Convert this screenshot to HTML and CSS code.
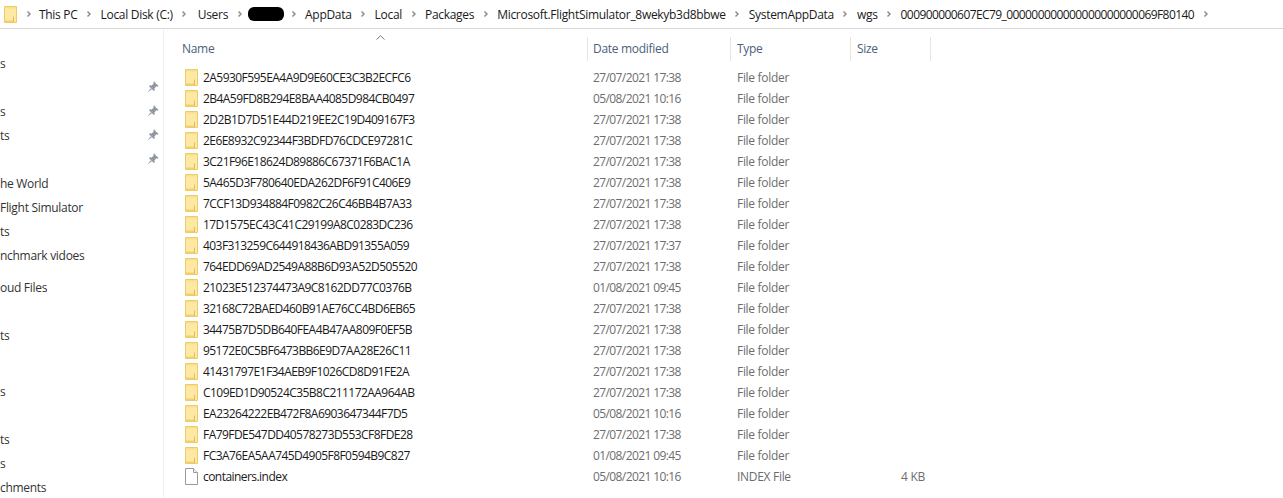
FILE: index.html
```html
<!DOCTYPE html>
<html lang="en">

<head>
    <meta charset="UTF-8">
    <meta name="viewport" content="width=device-width, initial-scale=1.0">
    <title>wgs</title>
    <link rel="stylesheet" href="styles.css">
</head>

<body>
    <svg class="defs" width="0" height="0">
        <symbol id="folder" viewBox="0 0 13 17">
            <path d="M0.5 0.5H12.5V16.5H0.5Z" fill="#fde9a4" stroke="#eccb6c"/>
            <path d="M1 1H12V2.5H1Z" fill="#fbe08a"/>
            <path d="M1 14.5H9V16H1Z" fill="#f3d06a"/>
            <path d="M9.5 10.5V16" fill="none" stroke="#e6bd55"/>
        </symbol>
        <symbol id="pin" viewBox="0 0 12 12">
            <path d="M7 0.5L11.5 5L10.5 5.8L9.5 5.3L7.5 7.3L7.7 9.3L6.8 10L2 5.2L2.7 4.3L4.7 4.5L6.7 2.5L6.2 1.5Z" fill="#8f98a3"/>
            <path d="M3.8 7.2L0.5 11.5L4.8 8.2Z" fill="#8f98a3"/>
        </symbol>
        <symbol id="chev" viewBox="0 0 6 8">
            <path d="M1.5 1.5L4 4L1.5 6.5" fill="none" stroke="#8f8f8f" stroke-width="1.5"/>
        </symbol>
    </svg>

    <div class="addressbar">
        <svg class="crumb-folder"><use href="#folder"/></svg>
        <svg class="chev"><use href="#chev"/></svg>
        <span class="crumb-first">This PC</span>
        <svg class="chev"><use href="#chev"/></svg>
        <span>Local Disk (C:)</span>
        <svg class="chev"><use href="#chev"/></svg>
        <span class="crumb-users">Users</span>
        <svg class="chev"><use href="#chev"/></svg>
        <span class="redacted"></span>
        <svg class="chev"><use href="#chev"/></svg>
        <span>AppData</span>
        <svg class="chev"><use href="#chev"/></svg>
        <span>Local</span>
        <svg class="chev"><use href="#chev"/></svg>
        <span>Packages</span>
        <svg class="chev"><use href="#chev"/></svg>
        <span>Microsoft.FlightSimulator_8wekyb3d8bbwe</span>
        <svg class="chev"><use href="#chev"/></svg>
        <span>SystemAppData</span>
        <svg class="chev"><use href="#chev"/></svg>
        <span>wgs</span>
        <svg class="chev"><use href="#chev"/></svg>
        <span class="crumb-id">000900000607EC79_000000000000000000000069F80140</span>
        <svg class="chev"><use href="#chev"/></svg>
    </div>

    <div class="explorer">
        <nav class="sidebar">
            <div class="nav-item">s</div>
            <div class="nav-item"><svg class="pin"><use href="#pin"/></svg></div>
            <div class="nav-item">s<svg class="pin"><use href="#pin"/></svg></div>
            <div class="nav-item">ts<svg class="pin"><use href="#pin"/></svg></div>
            <div class="nav-item"><svg class="pin"><use href="#pin"/></svg></div>
            <div class="nav-item">he World</div>
            <div class="nav-item">Flight Simulator</div>
            <div class="nav-item">ts</div>
            <div class="nav-item">nchmark vidoes</div>
            <div class="nav-item nav-group">oud Files</div>
            <div class="nav-item"></div>
            <div class="nav-item">ts</div>
            <div class="nav-item"></div>
            <div class="nav-item nav-group">s</div>
            <div class="nav-item"></div>
            <div class="nav-item">ts</div>
            <div class="nav-item">s</div>
            <div class="nav-item">chments</div>
        </nav>

        <main class="files">
            <div class="columns">
                <div class="col col-name">Name<svg class="sort" viewBox="0 0 9 5"><path d="M0.5 4.5L4.5 0.7L8.5 4.5" fill="none" stroke="#7a7a7a"/></svg></div>
                <div class="col col-date">Date modified</div>
                <div class="col">Type</div>
                <div class="col">Size</div>
            </div>

            <div class="row"><div class="name"><svg class="icon"><use href="#folder"/></svg>2A5930F595EA4A9D9E60CE3C3B2ECFC6</div><div class="date">27/07/2021 17:38</div><div class="cell">File folder</div><div class="cell"></div></div>
            <div class="row"><div class="name"><svg class="icon"><use href="#folder"/></svg>2B4A59FD8B294E8BAA4085D984CB0497</div><div class="date">05/08/2021 10:16</div><div class="cell">File folder</div><div class="cell"></div></div>
            <div class="row"><div class="name"><svg class="icon"><use href="#folder"/></svg>2D2B1D7D51E44D219EE2C19D409167F3</div><div class="date">27/07/2021 17:38</div><div class="cell">File folder</div><div class="cell"></div></div>
            <div class="row"><div class="name"><svg class="icon"><use href="#folder"/></svg>2E6E8932C92344F3BDFD76CDCE97281C</div><div class="date">27/07/2021 17:38</div><div class="cell">File folder</div><div class="cell"></div></div>
            <div class="row"><div class="name"><svg class="icon"><use href="#folder"/></svg>3C21F96E18624D89886C67371F6BAC1A</div><div class="date">27/07/2021 17:38</div><div class="cell">File folder</div><div class="cell"></div></div>
            <div class="row"><div class="name"><svg class="icon"><use href="#folder"/></svg>5A465D3F780640EDA262DF6F91C406E9</div><div class="date">27/07/2021 17:38</div><div class="cell">File folder</div><div class="cell"></div></div>
            <div class="row"><div class="name"><svg class="icon"><use href="#folder"/></svg>7CCF13D934884F0982C26C46BB4B7A33</div><div class="date">27/07/2021 17:38</div><div class="cell">File folder</div><div class="cell"></div></div>
            <div class="row"><div class="name"><svg class="icon"><use href="#folder"/></svg>17D1575EC43C41C29199A8C0283DC236</div><div class="date">27/07/2021 17:38</div><div class="cell">File folder</div><div class="cell"></div></div>
            <div class="row"><div class="name"><svg class="icon"><use href="#folder"/></svg>403F313259C644918436ABD91355A059</div><div class="date">27/07/2021 17:37</div><div class="cell">File folder</div><div class="cell"></div></div>
            <div class="row"><div class="name"><svg class="icon"><use href="#folder"/></svg>764EDD69AD2549A88B6D93A52D505520</div><div class="date">27/07/2021 17:38</div><div class="cell">File folder</div><div class="cell"></div></div>
            <div class="row"><div class="name"><svg class="icon"><use href="#folder"/></svg>21023E512374473A9C8162DD77C0376B</div><div class="date">01/08/2021 09:45</div><div class="cell">File folder</div><div class="cell"></div></div>
            <div class="row"><div class="name"><svg class="icon"><use href="#folder"/></svg>32168C72BAED460B91AE76CC4BD6EB65</div><div class="date">27/07/2021 17:38</div><div class="cell">File folder</div><div class="cell"></div></div>
            <div class="row"><div class="name"><svg class="icon"><use href="#folder"/></svg>34475B7D5DB640FEA4B47AA809F0EF5B</div><div class="date">27/07/2021 17:38</div><div class="cell">File folder</div><div class="cell"></div></div>
            <div class="row"><div class="name"><svg class="icon"><use href="#folder"/></svg>95172E0C5BF6473BB6E9D7AA28E26C11</div><div class="date">27/07/2021 17:38</div><div class="cell">File folder</div><div class="cell"></div></div>
            <div class="row"><div class="name"><svg class="icon"><use href="#folder"/></svg>41431797E1F34AEB9F1026CD8D91FE2A</div><div class="date">27/07/2021 17:38</div><div class="cell">File folder</div><div class="cell"></div></div>
            <div class="row"><div class="name"><svg class="icon"><use href="#folder"/></svg>C109ED1D90524C35B8C211172AA964AB</div><div class="date">27/07/2021 17:38</div><div class="cell">File folder</div><div class="cell"></div></div>
            <div class="row"><div class="name"><svg class="icon"><use href="#folder"/></svg>EA23264222EB472F8A6903647344F7D5</div><div class="date">05/08/2021 10:16</div><div class="cell">File folder</div><div class="cell"></div></div>
            <div class="row"><div class="name"><svg class="icon"><use href="#folder"/></svg>FA79FDE547DD40578273D553CF8FDE28</div><div class="date">27/07/2021 17:38</div><div class="cell">File folder</div><div class="cell"></div></div>
            <div class="row"><div class="name"><svg class="icon"><use href="#folder"/></svg>FC3A76EA5AA745D4905F8F0594B9C827</div><div class="date">01/08/2021 09:45</div><div class="cell">File folder</div><div class="cell"></div></div>
            <div class="row"><div class="name"><svg class="icon" viewBox="0 0 13 17"><path d="M0.5 0.5H8.5L12.5 4.5V16.5H0.5Z" fill="#fff" stroke="#9a9a9a"/><path d="M8.5 0.5V4.5H12.5" fill="#f2f2f2" stroke="#9a9a9a"/></svg>containers.index</div><div class="date">05/08/2021 10:16</div><div class="cell">INDEX File</div><div class="size">4 KB</div></div>
        </main>
    </div>
</body>

</html>
```

FILE: styles.css
```css
html,
body {
    margin: 0;
    height: 498px;
    overflow: hidden;
    background: #fff;
}

body {
    font-family: "Open Sans", sans-serif;
    font-size: 12px;
    letter-spacing: -0.3px;
    color: #1a1a1a;
}

.defs {
    display: block;
    height: 0;
}

.addressbar {
    display: flex;
    align-items: center;
    gap: 8.5px;
    height: 29px;
    padding-left: 4px;
    border-bottom: 1px solid #d9d9d9;
    white-space: nowrap;
    box-sizing: border-box;
}

.crumb-folder {
    width: 13px;
    height: 17px;
}

.chev {
    width: 6px;
    height: 8px;
}

.crumb-first {
    margin-left: -1px;
}

.crumb-users {
    margin-left: 2px;
}

.crumb-id {
    letter-spacing: -0.58px;
}

.redacted {
    width: 36px;
    height: 14px;
    margin: 0 -2px 0 -3px;
    border-radius: 6px;
    background: #000;
}

.explorer {
    display: flex;
}

.sidebar {
    width: 163px;
    height: 469px;
    padding-top: 22px;
    border-right: 1px solid #f0f0f0;
    overflow: hidden;
    color: #333;
}

.nav-item {
    display: flex;
    align-items: center;
    justify-content: space-between;
    height: 24px;
    padding-right: 4px;
    white-space: nowrap;
}

.nav-group {
    margin-top: 8px;
}

.pin {
    width: 12px;
    height: 12px;
    margin-left: auto;
}

.files {
    padding-left: 18px;
}

.columns,
.row {
    display: grid;
    grid-template-columns: 406px 143px 120px 80px;
}

.columns {
    height: 24px;
    margin-top: 8px;
    margin-bottom: 6px;
    color: #4c607a;
    line-height: 24px;
}

.col {
    position: relative;
    padding-left: 6px;
    border-right: 1px solid #e5e5e5;
}

.col-name {
    padding-left: 0;
}

.col-date {
    padding-left: 5px;
}

.sort {
    position: absolute;
    left: 194px;
    top: -2px;
    width: 9px;
    height: 5px;
}

.row {
    align-items: center;
    height: 21px;
    color: #6d6d6d;
}

.name {
    display: flex;
    align-items: center;
    gap: 5px;
    padding-left: 3px;
    letter-spacing: -0.55px;
    color: #1a1a1a;
}

.icon {
    width: 13px;
    height: 17px;
}

.cell {
    padding-left: 6px;
}

.date {
    padding-left: 5px;
    letter-spacing: -0.6px;
}

.size {
    padding-right: 6px;
    text-align: right;
}
```
